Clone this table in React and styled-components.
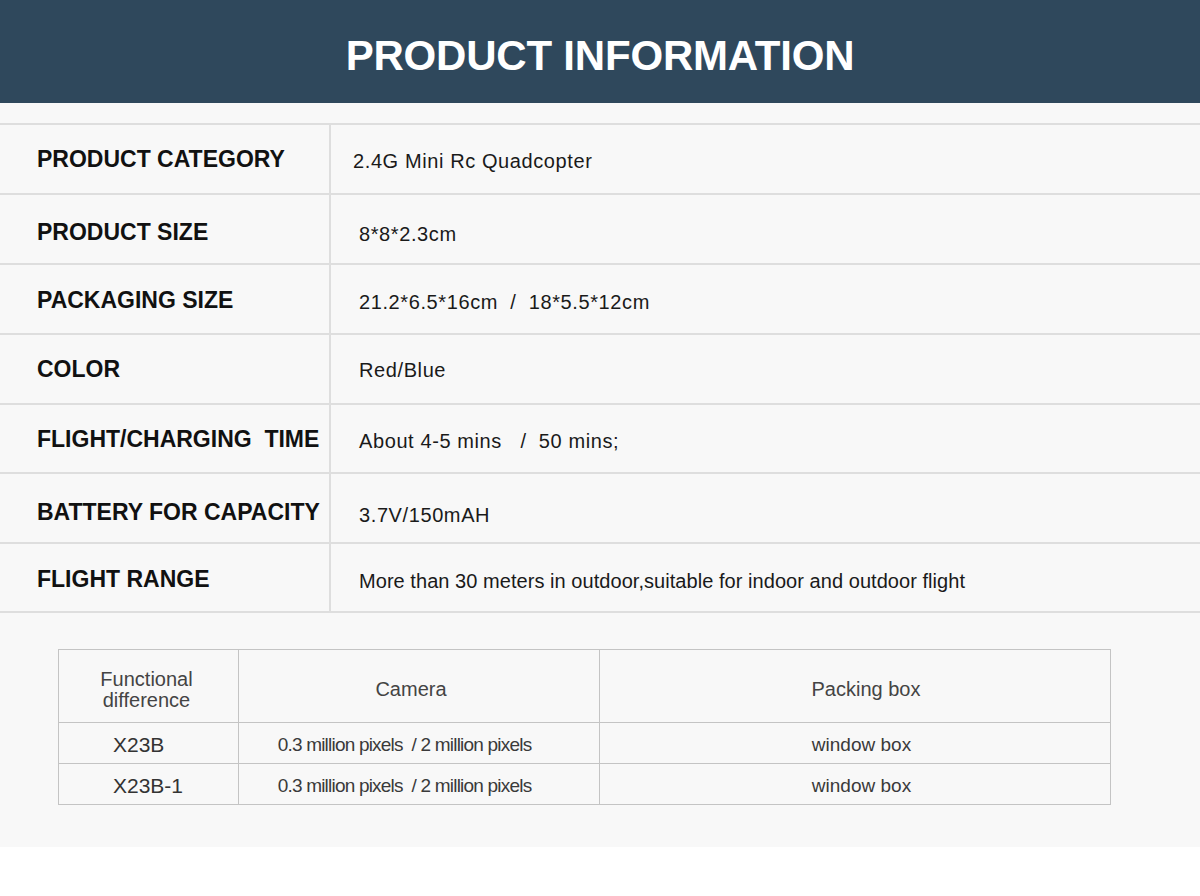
import React from "react";
import styled, { createGlobalStyle } from "styled-components";

const GlobalStyle = createGlobalStyle`
  html, body {
    margin: 0;
    padding: 0;
    background: #ffffff;
    font-family: "Liberation Sans", Arial, sans-serif;
  }
`;

const Page = styled.div`
  width: 1200px;
`;

const Banner = styled.header`
  height: 103px;
  box-sizing: border-box;
  padding-top: 8px;
  background-color: #2f485c;
  display: flex;
  align-items: center;
  justify-content: center;
`;

const BannerTitle = styled.h1`
  margin: 0;
  color: #ffffff;
  font-size: 42px;
  font-weight: 700;
  letter-spacing: -0.2px;
`;

const Section = styled.section`
  background-color: #f8f8f8;
  padding: 20px 0 42px;
`;

const SpecList = styled.div`
  border-top: 2px solid #dedede;
  margin-bottom: 36px;
`;

const SpecRow = styled.div`
  display: flex;
  height: ${(p) => p.$h}px;
  border-bottom: 2px solid #dedede;
`;

const SpecLabel = styled.div`
  width: 292px;
  padding-left: 37px;
  border-right: 2px solid #dedede;
  display: flex;
  align-items: center;
  padding-top: ${(p) => p.$shift || 0}px;
  font-size: 23px;
  font-weight: 700;
  color: #111111;
  white-space: pre;
`;

const SpecValue = styled.div`
  flex: 1;
  display: flex;
  align-items: center;
  padding-left: ${(p) => (p.$indent ? 22 : 28)}px;
  padding-top: ${(p) => (p.$shift || 0) + 5}px;
  font-size: 20px;
  color: #1a1a1a;
  letter-spacing: ${(p) => (p.$plain ? "0.05px" : "0.6px")};
  white-space: pre;
`;

const CompareTable = styled.table`
  margin-left: 58px;
  width: 1053px;
  border-collapse: collapse;
  color: #3a3a3a;
`;

const HeadCell = styled.th`
  border: 1px solid #c4c4c4;
  height: 73px;
  box-sizing: border-box;
  font-weight: 400;
  font-size: 20px;
  line-height: 21px;
  text-align: center;
  width: ${(p) => p.$w}px;
  padding: 7px ${(p) => p.$padR || 0}px 0 ${(p) => p.$padL || 0}px;
  color: #444444;
`;

const BodyCell = styled.td`
  border: 1px solid #c4c4c4;
  height: 41px;
  box-sizing: border-box;
  font-size: 19px;
  text-align: center;
  padding: 3px ${(p) => p.$padR || 0}px 0 ${(p) => p.$padL || 0}px;
  vertical-align: middle;
  white-space: pre;
`;

const ModelCell = styled(BodyCell)`
  font-size: 21px;
  text-align: left;
  padding-left: 54px;
  color: #333333;
`;

const PixelCell = styled(BodyCell)`
  letter-spacing: -0.8px;
`;

const specs = [
  { label: "PRODUCT CATEGORY", value: "2.4G Mini Rc Quadcopter", indent: true, shift: 0, h: 68 },
  { label: "PRODUCT SIZE", value: "8*8*2.3cm", shift: 6, h: 68 },
  { label: "PACKAGING SIZE", value: "21.2*6.5*16cm  /  18*5.5*12cm", shift: 2, h: 68 },
  { label: "COLOR", value: "Red/Blue", shift: -2, h: 68 },
  { label: "FLIGHT/CHARGING  TIME", value: "About 4-5 mins   /  50 mins;", shift: 1, h: 67 },
  { label: "BATTERY FOR CAPACITY", value: "3.7V/150mAH", shift: 9, h: 68 },
  {
    label: "FLIGHT RANGE",
    value: "More than 30 meters in outdoor,suitable for indoor and outdoor flight",
    shift: 3,
    h: 67,
    plain: true,
  },
];

const models = ["X23B", "X23B-1"];

export default function App() {
  return (
    <Page>
      <GlobalStyle />
      <Banner>
        <BannerTitle>PRODUCT INFORMATION</BannerTitle>
      </Banner>
      <Section>
        <SpecList>
          {specs.map((s) => (
            <SpecRow key={s.label} $h={s.h}>
              <SpecLabel $shift={s.shift}>{s.label}</SpecLabel>
              <SpecValue $indent={s.indent} $shift={s.shift} $plain={s.plain}>
                {s.value}
              </SpecValue>
            </SpecRow>
          ))}
        </SpecList>
        <CompareTable>
          <thead>
            <tr>
              <HeadCell $w={180} $padR={4}>
                Functional
                <br />
                difference
              </HeadCell>
              <HeadCell $w={361} $padR={16}>Camera</HeadCell>
              <HeadCell $w={511} $padL={22}>Packing box</HeadCell>
            </tr>
          </thead>
          <tbody>
            {models.map((m) => (
              <tr key={m}>
                <ModelCell>{m}</ModelCell>
                <PixelCell $padR={29}>0.3 million pixels  / 2 million pixels</PixelCell>
                <BodyCell $padL={13}>window box</BodyCell>
              </tr>
            ))}
          </tbody>
        </CompareTable>
      </Section>
    </Page>
  );
}
